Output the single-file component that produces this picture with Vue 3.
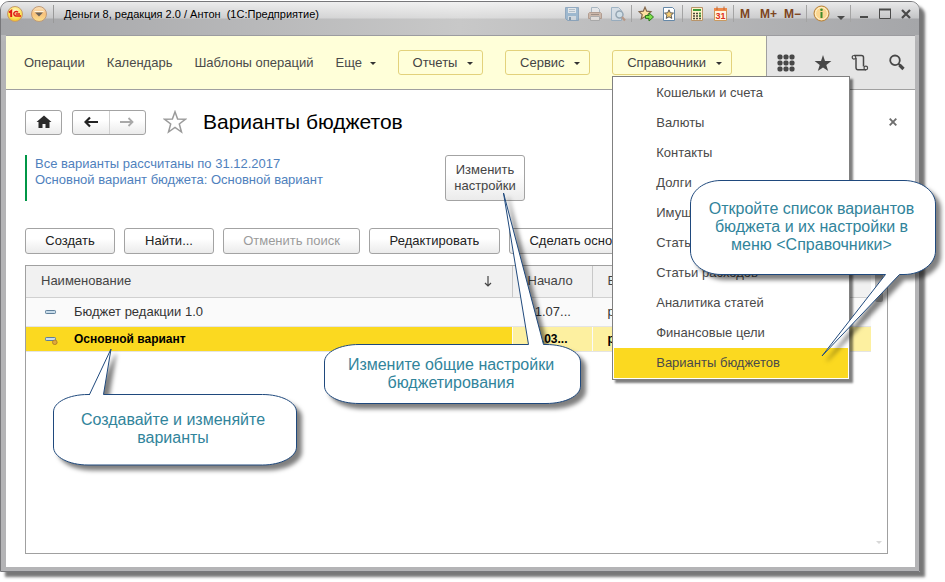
<script setup>
const links = ['Операции', 'Календарь', 'Шаблоны операций']
const menuItems = [
  'Кошельки и счета',
  'Валюты',
  'Контакты',
  'Долги',
  'Имущество',
  'Статьи доходов',
  'Статьи расходов',
  'Аналитика статей',
  'Финансовые цели',
  'Варианты бюджетов',
]
const rows = [
  { name: 'Бюджет редакции 1.0', start: '01.07...', currency: 'руб.', main: false },
  { name: 'Основной вариант', start: '01.03...', currency: 'руб.', main: true },
]
</script>

<template>
  <div class="stage">
    <div class="window">
      <header class="titlebar">
        <button class="tb logo" aria-label="1С">
          <svg width="18" height="18" viewBox="0 0 18 18">
            <defs>
              <radialGradient id="gLogo" cx=".5" cy=".35" r=".7">
                <stop offset="0" stop-color="#fffbe0" /><stop offset=".6" stop-color="#fde35a" /><stop offset="1" stop-color="#f0b018" />
              </radialGradient>
            </defs>
            <circle cx="9" cy="9" r="7.500" fill="url(#gLogo)" stroke="#c49a70" />
            <path d="M3 7.500 5.200 6V12" fill="none" stroke="#e01a14" stroke-width="2" />
            <path d="M12 7.400A2.300 2.300 0 1 0 9.800 11H15M9.600 9H14" fill="none" stroke="#e01a14" stroke-width="1.500" />
          </svg>
        </button>
        <button class="tb drop" aria-label="Главное меню">
          <svg width="18" height="18" viewBox="0 0 18 18">
            <defs>
              <linearGradient id="gDrop" x1="0" y1="0" x2="0" y2="1">
                <stop offset="0" stop-color="#fbe3bd" /><stop offset=".5" stop-color="#f8c27c" /><stop offset="1" stop-color="#fbe08c" />
              </linearGradient>
            </defs>
            <circle cx="9" cy="9" r="7.500" fill="url(#gDrop)" stroke="#bf9a78" />
            <path d="M5 7.500h8L9 11.500z" fill="#6b6258" />
            <path d="M4.500 6.500h9" stroke="#fff4e0" />
          </svg>
        </button>
        <span class="caption">Деньги 8, редакция 2.0 / Антон&nbsp; (1С:Предприятие)</span>

        <div class="tgroup first">
          <button class="tb" aria-label="Сохранить">
            <svg width="16" height="16" viewBox="0 0 16 16">
              <path d="M1.500 1.500h13v13h-11l-2-2z" fill="#8fb0cc" stroke="#7f9cb8" />
              <path d="M4 2h8v5H4z" fill="#e3e8ec" /><path d="M5 3.500h6M5 5.500h6" stroke="#a9b8c4" />
              <path d="M4 10h8v4H4z" fill="#cfd8e0" /><path d="M5 11h2v3H5z" fill="#6f8aa2" />
            </svg>
          </button>
          <button class="tb" aria-label="Печать">
            <svg width="16" height="16" viewBox="0 0 16 16">
              <path d="M4.500 1.500h6l2 2V7h-8z" fill="#e6e8ea" stroke="#9aabb9" />
              <path d="M2.500 6.500h11l1 1v5h-13v-5z" fill="#c8b0a0" stroke="#a88f80" />
              <path d="M3.500 10.500h9v4h-9z" fill="#e6e2de" stroke="#a3a3a3" /><path d="M4 8.500h8" stroke="#8f7d72" />
            </svg>
          </button>
          <button class="tb" aria-label="Просмотр">
            <svg width="16" height="16" viewBox="0 0 16 16">
              <path d="M1.500 1.500h7l3 3v10h-10z" fill="#d3dde6" stroke="#8fa8bd" />
              <circle cx="9.500" cy="8.500" r="3.500" fill="#cfe0ea" stroke="#8499aa" stroke-width="1.500" />
              <path d="m12 11 3 3.500" stroke="#b58f78" stroke-width="2.200" />
            </svg>
          </button>
        </div>
        <div class="tgroup">
          <button class="tb" aria-label="Добавить в избранное">
            <svg width="16" height="16" viewBox="0 0 16 16">
              <path d="m7 1.200 1.700 4 4.300.5-3.200 2.900.9 4.300L7 10.700l-3.700 2.200.9-4.300L1 5.700l4.300-.5z" fill="#fde0a0" stroke="#80664c" stroke-width="1.200" />
              <path d="M7.500 9.500h3.500v-2.600L15.500 11l-4.500 4v-2.600h-3.500z" fill="#7fe04c" stroke="#2c7a1c" />
            </svg>
          </button>
          <button class="tb" aria-label="Избранное">
            <svg width="16" height="16" viewBox="0 0 16 16">
              <path d="M2.500 1.500h9l2 2v11h-11z" fill="#fff" stroke="#6588a8" />
              <path d="m8 3.800 1.300 3 3.200.3-2.400 2.100.7 3.200L8 10.800l-2.800 1.600.7-3.200-2.400-2.100 3.200-.3z" fill="#f8cc70" stroke="#5c5a58" />
            </svg>
          </button>
        </div>
        <div class="tgroup">
          <button class="tb" aria-label="Калькулятор">
            <svg width="16" height="16" viewBox="0 0 16 16">
              <path d="M2.500 1.500h11v13h-11z" fill="#fff3c8" stroke="#b8946a" />
              <path d="M4 3h8v2H4z" fill="#3f9a3a" />
              <path d="M4 7.500h8M4 10h8M4 12.500h8" stroke="#4a4438" stroke-width="1.500" stroke-dasharray="2 1" />
              <path d="M10 7.500h2M10 10h2" stroke="#3f9a3a" stroke-width="1.500" />
            </svg>
          </button>
          <button class="tb" aria-label="Календарь">
            <svg width="16" height="16" viewBox="0 0 16 16">
              <path d="M2.500 2.500h12v12h-12z" fill="#fff6e0" stroke="#c89a62" />
              <path d="M2 2h13v3H2z" fill="#f08a4a" /><path d="M5 .5V4M12 .5V4" stroke="#b8683a" />
              <text x="8.500" y="13" text-anchor="middle" class="day">31</text>
            </svg>
          </button>
        </div>
        <div class="tgroup">
          <button class="tb mem m1">M</button>
          <button class="tb mem">M+</button>
          <button class="tb mem">M−</button>
        </div>
        <div class="tgroup">
          <button class="tb" aria-label="Справка">
            <svg width="17" height="17" viewBox="0 0 17 17">
              <circle cx="8.500" cy="8.500" r="7.500" fill="#fbd690" stroke="#b5803a" />
              <circle cx="8.500" cy="8.500" r="6" fill="none" stroke="#fff3cf" />
              <circle cx="8.500" cy="4.800" r="1.300" fill="#3f8a2c" /><path d="M8.500 7v6" stroke="#3f8a2c" stroke-width="2" />
            </svg>
          </button>
          <button class="tb" aria-label="Ещё">
            <svg width="8" height="16" viewBox="0 0 8 16"><path d="M0 10h8l-4 4z" fill="#4a4a4a" /></svg>
          </button>
        </div>
        <div class="tgroup wins">
          <button class="tb" aria-label="Свернуть">
            <svg width="12" height="12" viewBox="0 0 12 12"><path d="M2 9h8" stroke="#4a4a4a" stroke-width="2" /></svg>
          </button>
          <button class="tb" aria-label="Развернуть">
            <svg width="12" height="12" viewBox="0 0 12 12"><path d="M.5 1.500h11v9H.5z" fill="none" stroke="#4a4a4a" /><path d="M0 1.500h12" stroke="#4a4a4a" stroke-width="2" /></svg>
          </button>
          <button class="tb" aria-label="Закрыть">
            <svg width="12" height="12" viewBox="0 0 12 12"><path d="m2 2 8 8M10 2l-8 8" stroke="#4a4a4a" stroke-width="2.200" /></svg>
          </button>
        </div>
      </header>

      <div class="body">
        <div class="navbar">
          <nav class="nav">
            <a v-for="l in links" :key="l" href="#">{{ l }}</a>
            <a href="#" class="more">Еще <i class="caret"></i></a>
            <button class="navbtn">Отчеты <i class="caret"></i></button>
            <button class="navbtn">Сервис <i class="caret"></i></button>
            <div class="menuwrap">
              <button class="navbtn" aria-expanded="true">Справочники <i class="caret"></i></button>
              <ul class="menu">
                <li v-for="(m, i) in menuItems" :key="m" :class="{ active: i === menuItems.length - 1 }">
                  <a href="#">{{ m }}</a>
                </li>
              </ul>
            </div>
          </nav>
          <div class="tools">
            <button class="tb" aria-label="Разделы">
              <svg width="18" height="18" viewBox="0 0 18 18" fill="#484848">
                <template v-for="y in 3" :key="y">
                  <rect v-for="x in 3" :key="x" :x="x * 6 - 5.5" :y="y * 6 - 5.5" width="5" height="5" rx="1.800" />
                </template>
              </svg>
            </button>
            <button class="tb" aria-label="Избранное">
              <svg width="18" height="18" viewBox="0 0 18 18"><path d="m9 1 2 5.900 6.400.1-5.100 3.900 1.900 6.200L9 13.500l-5.200 3.600 1.900-6.200L.6 7l6.400-.1z" fill="#484848" /></svg>
            </button>
            <button class="tb" aria-label="История">
              <svg width="18" height="18" viewBox="0 0 18 18" fill="none" stroke="#484848" stroke-width="1.500">
                <path d="M3 1.500H10.500Q12.500 1.500 12.500 3.500V12.500M5 4V13.500Q5 15.800 7 15.800H15" />
                <circle cx="3" cy="3.300" r="1.800" stroke-width="1.200" />
                <circle cx="14.800" cy="14" r="1.800" stroke-width="1.200" />
              </svg>
            </button>
            <button class="tb" aria-label="Поиск">
              <svg width="18" height="18" viewBox="0 0 18 18" fill="none" stroke="#484848">
                <circle cx="7" cy="6.300" r="4.800" stroke-width="1.800" /><path d="m10.500 9.800 2 2" stroke-width="2" /><path d="m11.500 11 4 4" stroke-width="3.200" />
              </svg>
            </button>
          </div>
        </div>

        <main class="content">
          <div class="headrow">
            <button class="btn home" aria-label="Начальная страница">
              <svg width="16" height="14" viewBox="0 0 16 14"><path d="M8 .5 15.500 7H13.500V13H9.500V9H6.500V13H2.500V7H.5z" fill="#2c2c2c" /></svg>
            </button>
            <div class="pair">
              <button aria-label="Назад">
                <svg width="14" height="12" viewBox="0 0 14 12"><path d="M14 6H3M6 1.500 1.500 6 6 10.500" fill="none" stroke="#222" stroke-width="2.200" /></svg>
              </button>
              <button aria-label="Вперед" disabled>
                <svg width="14" height="12" viewBox="0 0 14 12"><path d="M0 6H12M8.500 2l4 4-4 4" fill="none" stroke="#a9a9a9" stroke-width="1.800" /></svg>
              </button>
            </div>
            <button class="tb star" aria-label="В избранное">
              <svg width="24" height="24" viewBox="0 0 24 24"><path d="m12 1.800 2.600 7.200 8 .2-6.300 4.800 2.200 8L12 17.500 5.500 22l2.200-8L1.400 9.200l8-.2z" fill="#fff" stroke="#9b9b9b" stroke-width="1.500" /></svg>
            </button>
            <h1>Варианты бюджетов</h1>
            <button class="tb close" aria-label="Закрыть">
              <svg width="8" height="8" viewBox="0 0 8 8"><path d="m.7.7 6.600 6.600M7.300.7.700 7.300" stroke="#6e6e6e" stroke-width="1.900" /></svg>
            </button>
          </div>

          <div class="inforow">
            <p class="info">Все варианты рассчитаны по 31.12.2017<br />Основной вариант бюджета: Основной вариант</p>
            <button class="btn settings">Изменить настройки</button>
          </div>

          <div class="toolbar">
            <button class="btn w1">Создать</button>
            <button class="btn w1">Найти...</button>
            <button class="btn w2" disabled>Отменить поиск</button>
            <button class="btn w3">Редактировать</button>
            <button class="btn w4">Сделать основным</button>
          </div>

          <div class="grid">
            <table>
              <colgroup><col /><col class="c2" /><col class="c3" /></colgroup>
              <thead>
                <tr>
                  <th>
                    <span class="sort">Наименование
                      <svg width="8" height="11" viewBox="0 0 8 11"><path d="M4 0v9.500M1 7l3 3 3-3" fill="none" stroke="#444" stroke-width="1.200" /></svg>
                    </span>
                  </th>
                  <th>Начало</th>
                  <th>Валюта</th>
                </tr>
              </thead>
              <tbody>
                <tr v-for="r in rows" :key="r.name" :class="{ selected: r.main }">
                  <td>
                    <span class="cell">
                      <svg width="13" height="12" viewBox="0 0 13 12">
                        <rect x=".5" y="4.500" width="10" height="3" rx=".8" fill="#c8dcea" stroke="#5f7f9a" />
                        <circle v-if="r.main" cx="9.800" cy="9.300" r="2.300" fill="#e0a83c" stroke="#a87824" stroke-width=".8" />
                      </svg>
                      {{ r.name }}
                    </span>
                  </td>
                  <td>{{ r.start }}</td>
                  <td>{{ r.currency }}</td>
                </tr>
              </tbody>
            </table>
            <div class="scroll"><i class="thumb"></i><i class="down"></i></div>
          </div>
        </main>
      </div>
    </div>

    <div class="callout create">
      <svg width="246" height="118" viewBox="0 0 246 118">
        <path d="M37 46.500H36.500L58 1 50.500 46.500H209.500C228 46.500 243.500 54 243.500 64V99C243.500 109 228 117 209.500 117H35C16 117 .5 109 .5 99V64C.5 54 16 46.500 35 46.500Z" />
      </svg>
      <p>Создавайте и изменяйте<br />варианты</p>
    </div>
    <div class="callout adjust">
      <svg width="260" height="214" viewBox="0 0 260 214">
        <path d="M35 152.500H204.500L179.500 1 219.500 152.500H222C241 152.500 256.500 160 256.500 170V194C256.500 204 241 211.500 222 211.500H35C16 211.500 .5 204 .5 194V170C.5 160 16 152.500 35 152.500Z" />
      </svg>
      <p>Измените общие настройки<br />бюджетирования</p>
    </div>
    <div class="callout open">
      <svg width="248" height="178" viewBox="0 0 248 178">
        <path d="M31 .5H214C231 .5 245.500 11 245.500 24V71C245.500 84 231 94.500 214 94.500H209.500L132 176 195.500 94.500H31C14 94.500 .5 84 .5 71V24C.5 11 14 .5 31 .5Z" />
      </svg>
      <p>Откройте список вариантов<br />бюджета и их настройки в<br />меню &lt;Справочники&gt;</p>
    </div>
  </div>
</template>

<style>
body {
  background: #fff;
}
</style>

<style scoped>
* {
  box-sizing: border-box;
}
.stage {
  position: relative;
  display: flex;
  min-height: 100vh;
  padding: 1px 25px 10px 0;
  overflow: hidden;
  font: 13px/16px "Liberation Sans", Arial, sans-serif;
  color: #444;
}
button {
  font: inherit;
  color: inherit;
  padding: 0;
}
.window {
  flex: 1;
  display: flex;
  flex-direction: column;
  padding: 0 4px 4px 5px;
  border: 1px solid #77777a;
  border-radius: 9px 9px 0 0;
  background: linear-gradient(180deg, #d4d4d5, #b4b4b6 40px, #b4b4b6);
  box-shadow: 5px 5px 3px #777;
}
.titlebar {
  display: flex;
  align-items: flex-start;
  height: 33px;
  margin: 0 -4px 0 -5px;
  padding: 3px 2px 0 5px;
  border-radius: 8px 8px 0 0;
  background:
    linear-gradient(180deg, rgba(255, 255, 255, 0.75) 0, rgba(255, 255, 255, 0.35) 16px, transparent 17px),
    linear-gradient(90deg, #a4a5a8, #c8c8c8 50%, #a5a6a9);
}
.tb {
  display: flex;
  align-items: center;
  justify-content: center;
  border: 0;
  background: none;
}
.drop {
  margin-left: 6px;
}
.caption {
  margin-left: 5px;
  padding-left: 10px;
  border-left: 1px solid #999;
  font-size: 11px;
  line-height: 18px;
  color: #000;
  white-space: nowrap;
}
.tgroup {
  display: flex;
  align-items: center;
  gap: 7px;
  height: 17px;
  padding: 0 5px 0 6px;
  border-left: 1px solid #a4a4a4;
}
.first {
  margin-left: auto;
  border-left: 0;
  opacity: 0.8;
}
.day {
  font: bold 9px "Liberation Sans", sans-serif;
  fill: #e0301c;
}
.mem {
  font-size: 12px;
  font-weight: bold;
  color: #7d4420;
}
.m1 {
  margin-right: 3px;
}
.wins {
  gap: 9px;
  padding-left: 7px;
}
.body {
  flex: 1;
  display: flex;
  flex-direction: column;
  background: #fff;
}
.navbar {
  display: flex;
  height: 55px;
  border-top: 1px solid #9c9ca0;
  border-bottom: 1px solid #a0a0a0;
}
.nav {
  flex: 1;
  display: flex;
  align-items: center;
  gap: 22px;
  padding-left: 18px;
  background: #ffffd9;
  white-space: nowrap;
}
.nav a {
  color: #4a4a4a;
  text-decoration: none;
}
.caret {
  display: inline-block;
  margin-left: 4px;
  border: 3px solid transparent;
  border-top-color: #333;
  border-bottom: 0;
  vertical-align: 2px;
}
.navbtn {
  height: 25px;
  padding: 0 9px 0 14px;
  border: 1px solid #e3d27c;
  border-radius: 3px;
  background: #ffffd9;
  white-space: nowrap;
}
.navbtn .caret {
  margin-left: 6px;
}
.menuwrap {
  position: relative;
}
.menu {
  position: absolute;
  z-index: 2;
  top: 26px;
  left: 0;
  width: 238px;
  margin: 0;
  padding: 1px;
  border: 1px solid #808080;
  background: #fff;
  box-shadow: 3px 3px 2px rgba(0, 0, 0, 0.5);
  list-style: none;
}
.menu a {
  display: block;
  padding-left: 42px;
  line-height: 30px;
}
.menu .active {
  background: #fbd920;
}
.tools {
  display: flex;
  align-items: center;
  gap: 19px;
  padding: 0 9px 0 10px;
  border-left: 1px solid #a0a0a0;
  background: #e5e5e5;
}
.content {
  flex: 1;
  display: flex;
  flex-direction: column;
  padding: 19px 27px 13px 19px;
}
.headrow {
  display: flex;
  align-items: center;
  height: 26px;
}
.btn,
.pair {
  border: 1px solid #a3a3a3;
  border-radius: 3px;
  background: linear-gradient(#fff 40%, #ebebeb);
}
.home {
  display: flex;
  align-items: center;
  justify-content: center;
  width: 37px;
  height: 25px;
}
.pair {
  display: flex;
  width: 74px;
  height: 25px;
  margin-left: 10px;
}
.pair button {
  flex: 1;
  display: flex;
  align-items: center;
  justify-content: center;
  border: 0;
  background: none;
}
.pair button + button {
  border-left: 1px solid #d0d0d0;
}
.star {
  margin-left: 17px;
}
h1 {
  margin: 0 0 0 16px;
  font-size: 21px;
  line-height: 26px;
  font-weight: normal;
  color: #000;
  white-space: nowrap;
}
.close {
  margin-left: auto;
  margin-right: -9px;
}
.inforow {
  display: flex;
  margin-top: 20px;
}
.info {
  width: 420px;
  height: 46px;
  margin: 0;
  padding: 1px 0 0 8px;
  border-left: 2px solid #009646;
  color: #4f81bd;
}
.settings {
  width: 80px;
  height: 46px;
}
.toolbar {
  display: flex;
  gap: 9px;
  margin-top: 27px;
  white-space: nowrap;
}
.toolbar .btn {
  height: 26px;
  color: #222;
}
.toolbar .w1 {
  width: 90px;
}
.toolbar .w2 {
  width: 137px;
  color: #9b9b9b;
}
.w3 {
  width: 131px;
}
.w4 {
  width: 156px;
}
.grid {
  flex: 1;
  display: flex;
  margin-top: 11px;
  border: 1px solid #a0a0a0;
}
table {
  flex: 1;
  align-self: flex-start;
  table-layout: fixed;
  border-collapse: collapse;
}
.c2 {
  width: 80px;
}
.c3 {
  width: 279px;
}
th {
  height: 31px;
  padding: 0 15px;
  border-bottom: 1px solid #d0d0d0;
  background: #f1f1f1;
  font-weight: normal;
  text-align: left;
}
th + th {
  border-left: 1px solid #c8c8c8;
}
td {
  height: 29px;
  padding: 0 15px;
  border-bottom: 1px solid #e4e4e4;
  background: #fafafa;
  color: #333;
  white-space: nowrap;
}
td + td {
  border-left: 1px solid #fafafa;
}
.selected td {
  height: 25px;
  background: #fdf0a0;
  font-size: 12px;
  font-weight: bold;
  color: #000;
}
.selected td:first-child {
  background: #fbd920;
}
.sort {
  display: flex;
  align-items: center;
  justify-content: space-between;
  padding-right: 5px;
}
.cell {
  display: flex;
  align-items: center;
  gap: 16px;
  padding-left: 4px;
}
.scroll {
  display: flex;
  flex-direction: column;
  align-items: center;
  justify-content: space-between;
  width: 16px;
  padding: 4px 0 9px;
}
.thumb {
  width: 8px;
  height: 32px;
  border-radius: 2px;
  background: #b8b8b8;
}
.down {
  border: 3px solid transparent;
  border-top-color: #d8d8d8;
  border-bottom: 0;
}
.callout {
  position: absolute;
  z-index: 3;
  display: flex;
  flex-direction: column;
}
.callout svg {
  position: absolute;
  top: 0;
  left: 0;
  overflow: visible;
  filter: drop-shadow(5px 5px 2px rgba(0, 0, 0, 0.5));
}
.callout path {
  fill: #fff;
  stroke: #1f497d;
}
.callout p {
  position: relative;
  margin: 0;
  font-size: 16px;
  line-height: 18px;
  text-align: center;
  color: #31849b;
  white-space: nowrap;
}
.create {
  top: 348px;
  left: 53px;
  width: 240px;
  padding-top: 63px;
}
.adjust {
  top: 192px;
  left: 324px;
  width: 254px;
  padding-top: 164px;
}
.open {
  top: 180px;
  left: 690px;
  width: 243px;
  padding-top: 20px;
}
</style>
